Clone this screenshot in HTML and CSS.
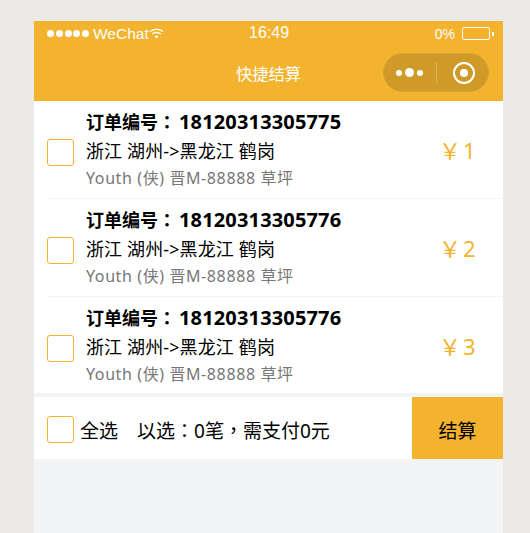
FILE: index.html
```html
<!DOCTYPE html>
<html lang="en">
<head>
    <meta charset="UTF-8">
    <meta name="viewport" content="width=device-width, initial-scale=1.0">
    <title>快捷结算</title>
    <link rel="stylesheet" href="styles.css">
</head>
<body>
    <div class="phone">
        <header class="top">
            <div class="status">
                <div class="status-left">
                    <span class="dots"><i></i><i></i><i></i><i></i><i></i></span>
                    <span class="carrier">WeChat</span>
                    <svg class="wifi" width="15" height="11" viewBox="0 0 15 11">
                        <path d="M1 3.6C4.6 .6 10.4 .6 14 3.6" fill="none" stroke="#fff" stroke-width="1.3"/>
                        <path d="M3.2 6C5.6 4 9.4 4 11.8 6" fill="none" stroke="#fff" stroke-width="1.3"/>
                        <path d="M5.4 8.2C6.6 7.2 8.4 7.2 9.6 8.2L7.5 10.6Z" fill="#fff"/>
                    </svg>
                </div>
                <div class="time">16:49</div>
                <div class="status-right">
                    <span class="percent">0%</span>
                    <span class="battery"></span>
                    <span class="battery-tip"></span>
                </div>
            </div>
            <div class="nav">
                <div class="nav-title">快捷结算</div>
                <div class="capsule">
                    <div class="capsule-more"><i></i><i class="big"></i><i></i></div>
                    <div class="capsule-line"></div>
                    <div class="capsule-close"><i></i></div>
                </div>
            </div>
        </header>

        <div class="order">
            <div class="check"></div>
            <div class="info">
                <div class="order-no">订单编号：<span class="num">18120313305775</span></div>
                <div class="route">浙江 湖州-&gt;黑龙江 鹤岗</div>
                <div class="car">Youth (侠) 晋M-88888 草坪</div>
            </div>
            <div class="price">￥1</div>
        </div>
        <div class="order">
            <div class="check"></div>
            <div class="info">
                <div class="order-no">订单编号：<span class="num">18120313305776</span></div>
                <div class="route">浙江 湖州-&gt;黑龙江 鹤岗</div>
                <div class="car">Youth (侠) 晋M-88888 草坪</div>
            </div>
            <div class="price">￥2</div>
        </div>
        <div class="order last">
            <div class="check"></div>
            <div class="info">
                <div class="order-no">订单编号：<span class="num">18120313305776</span></div>
                <div class="route">浙江 湖州-&gt;黑龙江 鹤岗</div>
                <div class="car">Youth (侠) 晋M-88888 草坪</div>
            </div>
            <div class="price">￥3</div>
        </div>

        <div class="footer">
            <div class="check"></div>
            <div class="all">全选</div>
            <div class="summary">以选：0笔，需支付0元</div>
            <div class="pay">结算</div>
        </div>
    </div>
</body>
</html>
```

FILE: styles.css
```css
html, body {
    height: 100%;
}

body {
    font-family: "Noto Sans", "Noto Sans CJK SC", sans-serif;
    background-color: #ebeae7;
    color: #000;
    margin: 0;
    padding: 21px 0 0 34px;
    box-sizing: border-box;
    overflow: hidden;
}

.phone {
    width: 469px;
    height: 512px;
    background-color: #f3f4f6;
}

.top {
    background-color: #f3b32e;
    color: #fff;
    height: 80px;
}

.status {
    height: 25px;
    padding: 0 9px 0 13px;
    display: flex;
    align-items: center;
    justify-content: space-between;
    position: relative;
    font-family: "Liberation Sans", sans-serif;
    font-size: 15.5px;
}

.status-left, .status-right {
    display: flex;
    align-items: center;
}

.dots {
    display: flex;
    gap: 1.75px;
    margin-right: 4px;
}

.dots i {
    width: 7px;
    height: 7px;
    border-radius: 50%;
    background-color: #fff;
}

.time {
    position: absolute;
    left: 215px;
    top: 3px;
    font-size: 16px;
}

.percent {
    font-size: 14px;
    margin-right: 7px;
}

.battery {
    width: 26px;
    height: 11px;
    border: 1px solid #fff;
    border-radius: 2px;
}

.battery-tip {
    width: 2px;
    height: 4px;
    margin-left: 2px;
    background-color: #fff;
}

.nav {
    height: 55px;
    position: relative;
    display: flex;
    align-items: center;
    justify-content: center;
}

.nav-title {
    font-size: 16.3px;
    margin-top: -1px;
}

.capsule {
    position: absolute;
    left: 349px;
    top: 7px;
    width: 106px;
    height: 39px;
    border: 1px solid #d6a436;
    border-radius: 20px;
    box-sizing: border-box;
    background-color: #cf9a28;
    display: flex;
    align-items: center;
}

.capsule-more {
    width: 52px;
    padding-right: 2px;
    box-sizing: border-box;
    display: flex;
    align-items: center;
    justify-content: center;
    gap: 3px;
}

.capsule-more i {
    width: 6px;
    height: 6px;
    border-radius: 50%;
    background-color: #fff;
}

.capsule-more .big {
    width: 9px;
    height: 9px;
}

.capsule-line {
    width: 1px;
    height: 21px;
    background-color: #dcb35a;
}

.capsule-close {
    width: 22px;
    height: 22px;
    margin-left: 16px;
    border: 2px solid #fff;
    border-radius: 50%;
    box-sizing: border-box;
    display: flex;
    align-items: center;
    justify-content: center;
}

.capsule-close i {
    width: 8px;
    height: 8px;
    border-radius: 50%;
    background-color: #fff;
}

.order {
    height: 98px;
    background-color: #fff;
    display: flex;
    align-items: flex-start;
    padding: 9px 0 0 13px;
    position: relative;
    box-sizing: border-box;
}

.order::after {
    content: "";
    position: absolute;
    left: 13px;
    right: 0;
    bottom: 0;
    height: 1px;
    background-color: #f3f4f6;
}

.order.last {
    height: 96px;
}

.order.last::after {
    display: none;
}

.check {
    width: 25px;
    height: 25px;
    border: 1px solid #f3b32e;
    border-radius: 3px;
    background-color: #fff;
    flex: none;
}

.order .check {
    margin-top: 29px;
}

.info {
    margin-left: 12px;
    flex: 1;
}

.order-no {
    font-family: "Noto Sans", "Noto Sans CJK TC", sans-serif;
    font-size: 18px;
    font-weight: bold;
    height: 26px;
    line-height: 24px;
}

.num {
    font-size: 20px;
    margin-left: 3px;
    letter-spacing: 0.15px;
}

.route {
    font-size: 18px;
    line-height: 30px;
    letter-spacing: 0.12px;
}

.car {
    font-size: 16px;
    line-height: 24px;
    letter-spacing: 0.6px;
    color: #777;
}

.price {
    width: 64px;
    margin-top: 23px;
    font-size: 22px;
    letter-spacing: 2px;
    color: #f3b32e;
}

.footer {
    margin-top: 4px;
    height: 62px;
    background-color: #fff;
    display: flex;
    align-items: center;
    padding-left: 13px;
}

.footer .check {
    margin-top: 2px;
}

.all {
    font-size: 19px;
    margin: 3px 0 0 6px;
}

.summary {
    font-family: "Noto Sans", "Noto Sans CJK TC", sans-serif;
    font-size: 19px;
    margin: 3px 0 0 19px;
    flex: 1;
}

.pay {
    width: 91px;
    height: 62px;
    padding-top: 3px;
    box-sizing: border-box;
    background-color: #f3b32e;
    font-size: 19px;
    display: flex;
    align-items: center;
    justify-content: center;
}
```
